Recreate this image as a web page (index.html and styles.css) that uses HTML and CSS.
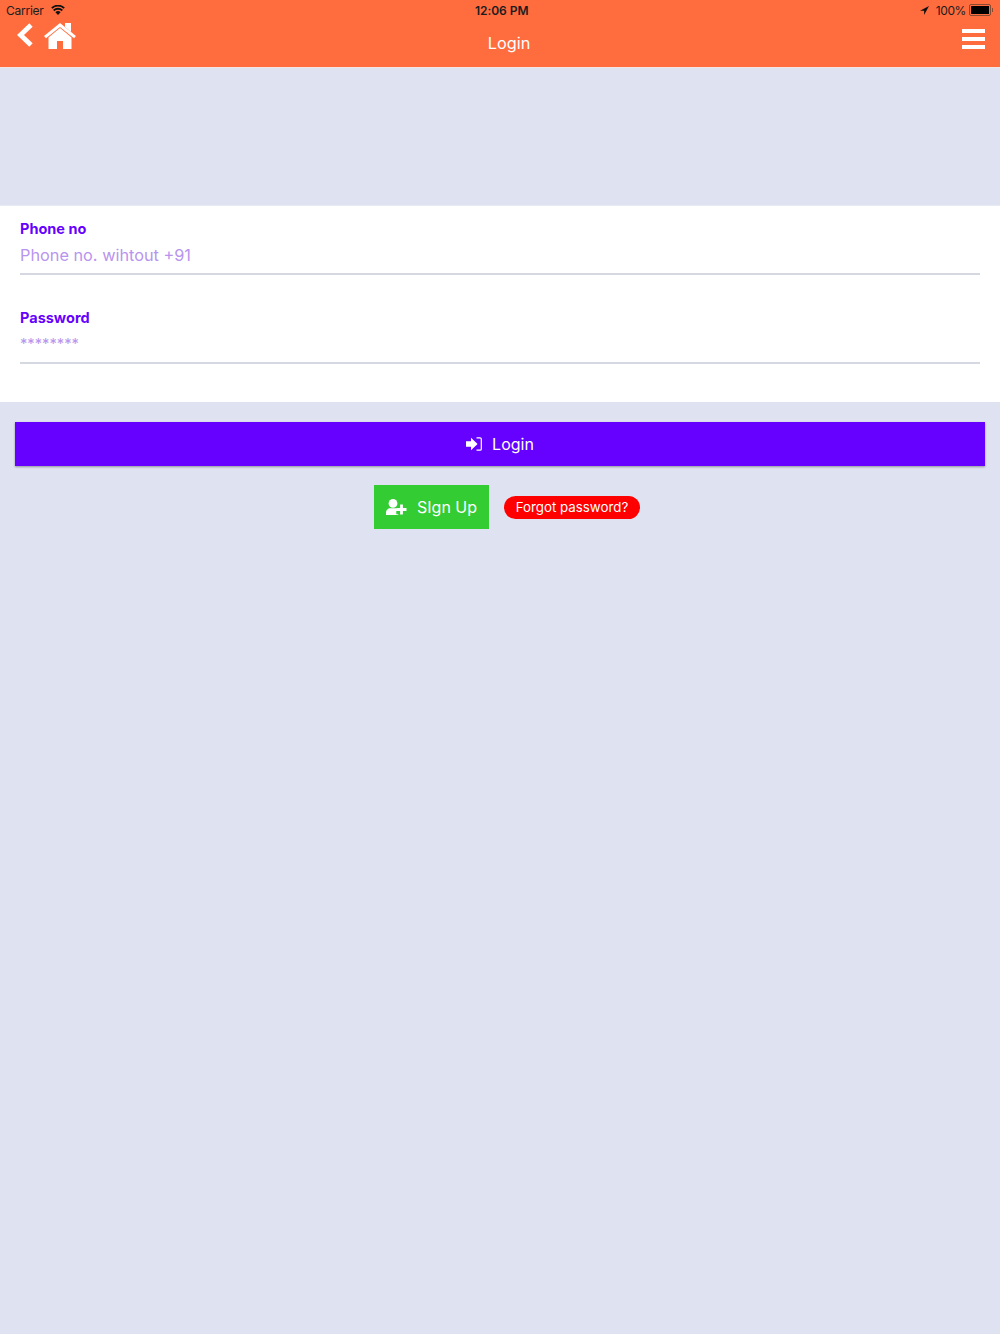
FILE: index.html
```html
<!DOCTYPE html>
<html>
    <head>
        <meta charset="utf-8">
        <title>Login</title>
        <link rel="stylesheet" href="styles.css">
    </head>
    <body>
        <header class="topbar">
            <div class="status">
                <div class="statusLeft">
                    <span>Carrier</span>
                    <svg class="wifi" viewBox="0 0 14 10"><path d="M7 10 4.400 7.200a3.700 3.700 0 0 1 5.200 0z" fill="#111"/><path d="M2.700 5.500a6.200 6.200 0 0 1 8.600 0" fill="none" stroke="#111" stroke-width="1.800"/><path d="M.8 3.100a9 9 0 0 1 12.400 0" fill="none" stroke="#111" stroke-width="1.800"/></svg>
                </div>
                <div class="statusTime">12:06 PM</div>
                <div class="statusRight">
                    <svg class="arrow" viewBox="0 0 10 10"><path d="M10 0 0 5.200h4.600V10z" fill="#111"/></svg>
                    <span>100%</span>
                    <div class="battery"><div class="batteryFill"></div></div>
                    <div class="batteryTip"></div>
                </div>
            </div>
            <div class="navbar">
                <div class="navLeft">
                    <svg class="back" viewBox="0 0 17 26"><path d="M14 3 3.500 13 14 23" fill="none" stroke="#fff" stroke-width="4.800"/></svg>
                    <svg class="home" viewBox="0 0 32 26"><path d="M16 5 4.500 14.500V26H13v-8h6v8h8.500V14.500z" fill="#fff"/><path d="M1 14.200 16 2 31 14.200" fill="none" stroke="#fff" stroke-width="3"/><path d="M21 0h6v9l-6-5z" fill="#fff"/></svg>
                </div>
                <div class="navTitle">Login</div>
                <div class="menu"><span></span><span></span><span></span></div>
            </div>
        </header>
        <div class="spacer"></div>
        <form class="fields">
            <label class="field">
                <span class="fieldLabel">Phone no</span>
                <span class="fieldInput">Phone no. wihtout +91</span>
            </label>
            <label class="field">
                <span class="fieldLabel">Password</span>
                <span class="fieldInput small">********</span>
            </label>
        </form>
        <div class="loginWrap">
            <button type="button" class="loginBtn">
                <svg class="loginIcon" viewBox="0 0 16 14"><path d="M0 4.300h5V.8L11.600 7 5 13.200V9.700H0z" fill="#fff"/><path d="M10.500.8H14a1.300 1.300 0 0 1 1.300 1.300v9.800a1.300 1.300 0 0 1-1.300 1.300h-3.500" fill="none" stroke="#fff" stroke-width="1.200"/></svg>
                Login
            </button>
        </div>
        <div class="actions">
            <button type="button" class="signupBtn">
                <svg class="signupIcon" viewBox="0 0 21 16"><circle cx="7" cy="4.400" r="4.400" fill="#fff"/><path d="M0 16v-2.500C0 11 2 9.300 4 9.300h6c1 0 1.700.2 2.300.6V12h-2v3.200h2V16z" fill="#fff"/><path d="M15.500 5.500v10M10.500 10.500h10" stroke="#fff" stroke-width="2.800"/></svg>
                SIgn Up
            </button>
            <button type="button" class="forgotBtn">Forgot password?</button>
        </div>
    </body>
</html>
```

FILE: styles.css
```css
html, body{
    margin: 0;
    padding: 0;
}
body{
    width: 1000px;
    height: 1334px;
    overflow: hidden;
    background-color: #dfe2f0;
    font-family: Inter, "Noto Sans", sans-serif;
}
.topbar{
    height: 67px;
    background-color: #ff6d3f;
    border-bottom: 1px solid #f3e6e2;
}
.status{
    display: flex;
    justify-content: space-between;
    align-items: center;
    height: 20px;
    padding: 0 7px 0 6px;
    font-size: 12px;
    color: #1c1c1c;
    position: relative;
}
.statusLeft, .statusRight{
    display: flex;
    align-items: center;
}
.statusLeft{
    letter-spacing: -0.25px;
}
.statusRight{
    letter-spacing: -0.4px;
}
.wifi{
    width: 14px;
    height: 10px;
    margin-left: 7px;
}
.statusTime{
    position: absolute;
    left: 475px;
    font-weight: 600;
    letter-spacing: -0.05px;
}
.arrow{
    width: 9px;
    height: 9px;
    margin-right: 7px;
}
.battery{
    width: 18px;
    height: 8px;
    margin-left: 3px;
    padding: 1px;
    border: 1px solid #8a4a30;
    border-radius: 2px;
}
.batteryFill{
    height: 100%;
    background-color: #000;
}
.batteryTip{
    width: 1px;
    height: 4px;
    margin-left: 1px;
    background-color: #8a4a30;
}
.navbar{
    display: flex;
    justify-content: space-between;
    height: 47px;
    position: relative;
}
.navLeft{
    display: flex;
    align-items: flex-start;
    padding-left: 17px;
    padding-top: 2px;
}
.back{
    width: 17px;
    height: 26px;
}
.home{
    width: 32px;
    height: 26px;
    margin-left: 10px;
    margin-top: 1px;
}
.navTitle{
    position: absolute;
    left: 0;
    right: -18px;
    top: 13px;
    text-align: center;
    font-size: 16.3px;
    color: #fff;
}
.menu{
    display: flex;
    flex-direction: column;
    gap: 4px;
    margin: 9px 15px 0 0;
}
.menu span{
    display: block;
    width: 23px;
    height: 4px;
    background-color: #fff;
}
.spacer{
    height: 137px;
}
.fields{
    height: 197px;
    box-sizing: border-box;
    padding: 14px 20px 0;
    background-color: #fff;
    border-top: 1px solid #e9ebf4;
}
.field{
    display: block;
    height: 89px;
}
.fieldLabel{
    display: block;
    font-size: 14.5px;
    line-height: 17px;
    font-weight: 700;
    color: #6600ff;
}
.fieldInput{
    display: block;
    height: 36px;
    font-size: 16.3px;
    line-height: 36px;
    color: #b894ee;
    border-bottom: 2px solid #d5d8e0;
}
.fieldInput.small{
    font-size: 14.7px;
}
.loginWrap{
    padding: 20px 15px 0;
}
.loginBtn{
    display: flex;
    justify-content: center;
    align-items: center;
    width: 100%;
    height: 44px;
    padding: 0;
    border: none;
    background-color: #6600ff;
    color: #fff;
    font-family: inherit;
    font-size: 16px;
    box-shadow: 0 1px 2px rgba(0, 0, 0, 0.35);
}
.loginIcon{
    width: 16px;
    height: 14px;
    margin-right: 10px;
}
.actions{
    display: flex;
    align-items: center;
    padding: 19px 0 0 374px;
}
.signupBtn{
    display: flex;
    align-items: center;
    height: 44px;
    width: 115px;
    padding: 0 0 0 12px;
    border: none;
    background-color: #33cc33;
    color: #fff;
    font-family: inherit;
    font-size: 16px;
}
.signupIcon{
    width: 21px;
    height: 16px;
    margin-right: 10px;
}
.forgotBtn{
    height: 23px;
    width: 136px;
    margin-left: 15px;
    padding: 0;
    border: none;
    border-radius: 12px;
    background-color: #ff0000;
    color: #fff;
    font-family: inherit;
    font-size: 13.3px;
}
```
